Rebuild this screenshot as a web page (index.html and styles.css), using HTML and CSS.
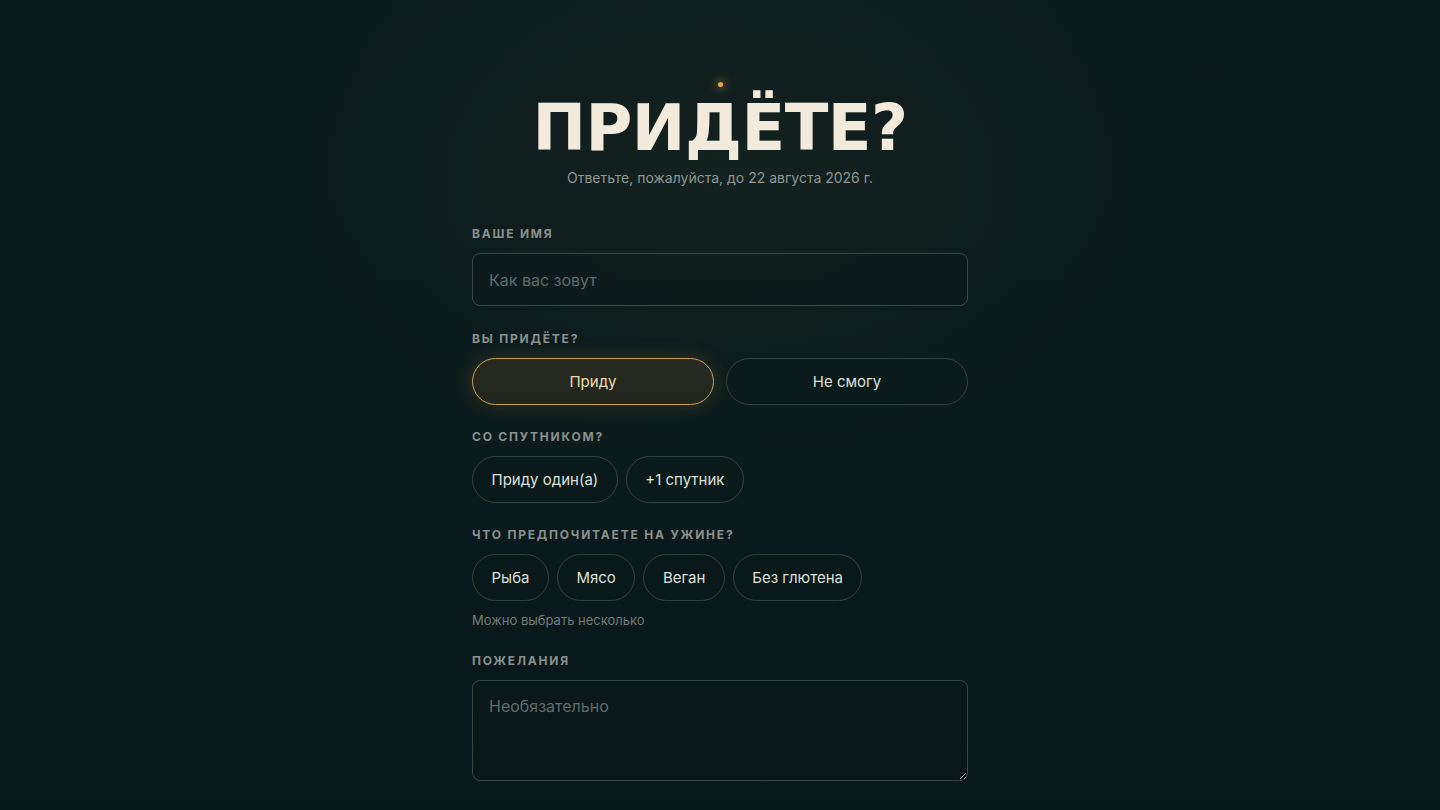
FILE: index.html
```html
<!DOCTYPE html>
<html lang="ru">
<head>
<meta charset="utf-8">
<title>Придёте?</title>
<link rel="stylesheet" href="styles.css">
</head>
<body>
<main class="page">
  <header class="hero">
    <span class="spark"></span>
    <h1 class="title">ПРИДЁТЕ?</h1>
    <p class="subtitle">Ответьте, пожалуйста, до 22 августа 2026 г.</p>
  </header>
  <form class="form">
    <div class="field">
      <label class="label">Ваше имя</label>
      <input class="input" type="text" placeholder="Как вас зовут">
    </div>
    <div class="field">
      <span class="label">Вы придёте?</span>
      <div class="choice-row">
        <button type="button" class="choice choice-on">Приду</button>
        <button type="button" class="choice">Не смогу</button>
      </div>
    </div>
    <div class="field">
      <span class="label">Со спутником?</span>
      <div class="pill-row">
        <button type="button" class="pill">Приду один(а)</button>
        <button type="button" class="pill">+1 спутник</button>
      </div>
    </div>
    <div class="field">
      <span class="label">Что предпочитаете на ужине?</span>
      <div class="pill-row">
        <button type="button" class="pill">Рыба</button>
        <button type="button" class="pill">Мясо</button>
        <button type="button" class="pill">Веган</button>
        <button type="button" class="pill">Без глютена</button>
      </div>
      <p class="hint">Можно выбрать несколько</p>
    </div>
    <div class="field">
      <label class="label">Пожелания</label>
      <textarea class="textarea" placeholder="Необязательно"></textarea>
    </div>
  </form>
</main>
</body>
</html>
```

FILE: styles.css
```css
* { box-sizing: border-box; }
html, body {
  margin: 0;
  height: 100%;
}
body {
  font-family: Inter, "Noto Sans", sans-serif;
  color: #dfe2dc;
  background:
    radial-gradient(ellipse 620px 420px at 50% 22%, rgba(24,38,32,0.7) 0%, rgba(20,34,31,0.3) 45%, rgba(12,26,27,0) 100%),
    linear-gradient(180deg, #0b1a1c 0%, #0a191b 60%, #081719 100%);
  overflow: hidden;
}
.page {
  width: 496px;
  margin: 0 auto;
  padding-top: 82px;
}
.hero {
  display: flex;
  flex-direction: column;
  align-items: center;
}
.spark {
  width: 5px;
  height: 5px;
  border-radius: 50%;
  background: #e8a84e;
  box-shadow: 0 0 8px 3px rgba(230,160,70,0.3);
  margin-bottom: 9px;
}
.title {
  margin: 0;
  font-family: "DejaVu Sans", sans-serif;
  font-weight: 700;
  font-size: 64px;
  line-height: 64px;
  letter-spacing: -0.5px;
  color: #f2eadb;
  white-space: nowrap;
}
.subtitle {
  margin: 8px 0 0;
  font-size: 14px;
  line-height: 20px;
  color: #8e9792;
}
.form {
  margin-top: 38px;
  display: flex;
  flex-direction: column;
  gap: 24.5px;
}
.field {
  display: flex;
  flex-direction: column;
}
.label {
  display: block;
  font-size: 12px;
  line-height: 16px;
  font-weight: 700;
  letter-spacing: 0.15em;
  text-transform: uppercase;
  color: #89918d;
  margin-bottom: 11px;
}
.input, .textarea {
  width: 100%;
  font-family: Inter, "Noto Sans", sans-serif;
  font-size: 16px;
  color: #dfe2dc;
  background: rgba(10,24,26,0.45);
  border: 1px solid #3a4947;
  border-radius: 8px;
  outline: none;
}
.input {
  height: 53px;
  padding: 0 16px;
}
.textarea {
  height: 101px;
  padding: 15px 16px;
  resize: vertical;
  display: block;
}
.input::placeholder, .textarea::placeholder {
  color: #5f6c69;
}
.choice-row {
  display: grid;
  grid-template-columns: 1fr 1fr;
  gap: 12px;
}
.choice, .pill {
  font-family: Inter, "Noto Sans", sans-serif;
  font-size: 15px;
  color: #dde0da;
  background: rgba(10,24,26,0.4);
  border: 1px solid #34433f;
  border-radius: 999px;
  height: 47px;
  cursor: pointer;
}
.choice-on {
  color: #efdcae;
  border-color: #c9a455;
  background: linear-gradient(180deg, #272a20 0%, #22271e 100%);
  box-shadow: 0 0 18px 2px rgba(200,160,70,0.16);
}
.pill-row {
  display: flex;
  gap: 8px;
}
.pill {
  height: 46.5px;
  padding: 0 18.5px;
}
.hint {
  margin: 10px 0 0;
  font-size: 13px;
  line-height: 18px;
  color: #727d79;
}
```
